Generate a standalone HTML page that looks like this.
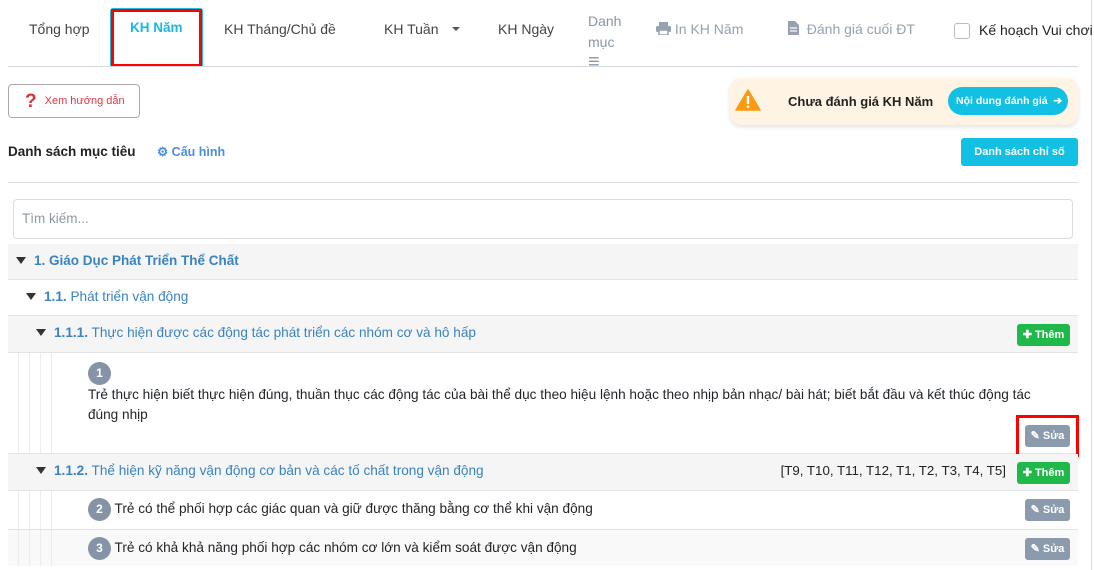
<!DOCTYPE html>
<html><head><meta charset="utf-8">
<style>
*{box-sizing:border-box;margin:0;padding:0}
body{width:1094px;height:570px;overflow:hidden;background:#fff;font-family:"Liberation Sans",Arial,sans-serif;font-size:13.6px;color:#212529;position:relative}
.a{position:absolute;white-space:nowrap}
.nav{color:#444;font-size:14px}
.row{position:absolute;left:8px;width:1070px;border-bottom:1px solid #e3e3e3}
.g{background:#f5f5f5}
.tri{display:inline-block;width:0;height:0;border-left:5px solid transparent;border-right:5px solid transparent;border-top:7px solid #333;margin-right:8px;vertical-align:1px}
.blue{color:#3a83c0}
.badge{display:inline-block;width:23px;height:23px;border-radius:50%;background:#8593a6;color:#fff;font-weight:bold;font-size:12px;text-align:center;line-height:23px}
.btn{position:absolute;border-radius:3px;color:#fff;font-weight:bold;font-size:11px;text-align:center;line-height:22px;height:22px}
.them{background:#1fb94a;width:53px;left:1009px}
.sua{background:#8c9aae;width:45px;left:1017px}
.vl{position:absolute;top:0;bottom:0;width:1px;background:#ececec}
</style></head><body>
<div class="a" style="left:1091px;top:0;width:1px;height:570px;background:#ddd"></div>
<div class="a nav" style="left:29px;top:21px">Tổng hợp</div>
<div class="a" style="left:110px;top:8px;width:93px;height:59px;border:1px solid #1bc0e0;border-bottom:none;border-radius:3px 3px 0 0"></div>
<div class="a" style="left:111px;top:9px;width:91px;height:58px;border:3px solid #f00"></div>
<div class="a" style="left:130px;top:20px;color:#1bb8dd;font-weight:bold;font-size:13.5px">KH Năm</div>
<div class="a nav" style="left:224px;top:21px">KH Tháng/Chủ đề</div>
<div class="a nav" style="left:384px;top:21px">KH Tuần <span style="display:inline-block;border-left:4px solid transparent;border-right:4px solid transparent;border-top:4px solid #555;margin-left:10px;vertical-align:3px"></span></div>
<div class="a nav" style="left:498px;top:21px">KH Ngày</div>
<div class="a" style="left:588px;top:11px;color:#8a96a6;font-size:14px;line-height:21px">Danh<br>mục<br><span style="font-size:20px;line-height:18px">≡</span></div>
<div class="a" style="left:656px;top:21px;color:#97a1b0;font-size:14px"><svg width="15" height="13" viewBox="0 0 15 13" style="vertical-align:-1px"><rect x="3" y="0" width="9" height="4" fill="#97a1b0"/><rect x="0" y="4" width="15" height="6" rx="1.5" fill="#97a1b0"/><rect x="3" y="8" width="9" height="5" fill="#fff" stroke="#97a1b0" stroke-width="1.5"/></svg> In KH Năm</div>
<div class="a" style="left:788px;top:21px;color:#97a1b0;font-size:14px"><svg width="11" height="14" viewBox="0 0 11 14" style="vertical-align:-1px"><path d="M0 0h7l4 4v10H0z" fill="#97a1b0"/><path d="M2 7h7M2 10h7" stroke="#fff" stroke-width="1.2"/></svg>&nbsp; Đánh giá cuối ĐT</div>
<div class="a" style="left:954px;top:23px;width:16px;height:16px;border:1px solid #bbb;border-radius:3px"></div>
<div class="a" style="left:979px;top:22px;font-size:14px;color:#222">Kế hoạch Vui chơi</div>
<div class="a" style="left:8px;top:66px;width:1070px;height:1px;background:#d6d9dd"></div>

<div class="a" style="left:8px;top:84px;width:132px;height:34px;border:1px solid #aaa;border-radius:4px;color:#e53545;font-size:11px;line-height:32px;padding-left:16px"><b style="font-size:19px;vertical-align:-3px;margin-right:8px;color:#e0303e">?</b>Xem hướng dẫn</div>

<div class="a" style="left:730px;top:78px;width:348px;height:47px;background:#fff3e4;border-radius:11px;box-shadow:0 2px 5px rgba(0,0,0,.12)"></div>
<svg class="a" style="left:735px;top:89px" width="26" height="22" viewBox="0 0 26 22"><path d="M13 1L25 21H1z" fill="#fb9a10" stroke="#fb9a10" stroke-width="1.5" stroke-linejoin="round"/><rect x="11.8" y="7" width="2.4" height="8" fill="#fff"/><rect x="11.8" y="16.5" width="2.4" height="2.4" fill="#fff"/></svg>
<div class="a" style="left:788px;top:94px;font-weight:bold;font-size:13px;color:#222">Chưa đánh giá KH Năm</div>
<div class="a" style="left:948px;top:87px;width:120px;height:28px;background:#12c0e4;border-radius:14px;color:#fff;font-weight:bold;font-size:10.5px;line-height:28px;padding-left:8px">Nội dung đánh giá &nbsp;➔</div>

<div class="a" style="left:8px;top:144px;font-weight:bold;font-size:13.5px;color:#222">Danh sách mục tiêu</div>
<div class="a" style="left:157px;top:144px;font-weight:bold;font-size:12.5px;color:#4a8ee0">⚙ Cấu hình</div>
<div class="a" style="left:961px;top:138px;width:117px;height:28px;background:#12c0e4;border-radius:3px;color:#fff;font-weight:bold;font-size:11px;line-height:28px;text-align:center">Danh sách chỉ số</div>

<div class="a" style="left:8px;top:182px;width:1070px;height:1px;background:#ddd"></div>
<div class="a" style="left:13px;top:199px;width:1060px;height:40px;border:1px solid #ddd;border-radius:4px;color:#8e98a4;font-size:13.5px;line-height:38px;padding-left:8px">Tìm kiếm...</div>

<div class="row g" style="top:244px;height:36px;padding:9px 0 0 8px"><span class="tri"></span><b class="blue" style="font-size:13.5px">1. Giáo Dục Phát Triển Thể Chất</b></div>
<div class="row" style="top:280px;height:36px;padding:9px 0 0 18px"><span class="tri"></span><span class="blue"><b>1.1.</b> Phát triển vận động</span></div>
<div class="row g" style="top:316px;height:37px;padding:9px 0 0 28px"><span class="tri"></span><span class="blue"><b>1.1.1.</b> Thực hiện được các động tác phát triển các nhóm cơ và hô hấp</span>
<div class="btn them" style="top:8px">✚ Thêm</div></div>
<div class="row" style="top:353px;height:101px">
<div class="vl" style="left:10px"></div><div class="vl" style="left:21px"></div><div class="vl" style="left:32px"></div><div class="vl" style="left:43px"></div>
<div class="a" style="left:80px;top:9px"><span class="badge">1</span></div>
<div class="a" style="left:80px;top:32px;white-space:normal;width:960px;line-height:20px">Trẻ thực hiện biết thực hiện đúng, thuần thục các động tác của bài thể dục theo hiệu lệnh hoặc theo nhịp bản nhạc/ bài hát; biết bắt đầu và kết thúc động tác<br>đúng nhịp</div>
<div class="btn sua" style="top:72px"><span style="font-size:11px">✎</span> Sửa</div>
<div class="a" style="left:1008px;top:62px;width:63px;height:42px;border:3px solid #f00"></div>
</div>
<div class="row g" style="top:454px;height:37px;padding:9px 0 0 28px"><span class="tri"></span><span class="blue"><b>1.1.2.</b> Thể hiện kỹ năng vận động cơ bản và các tố chất trong vận động</span>
<div class="a" style="right:72px;top:9px;color:#222;font-size:13.3px">[T9, T10, T11, T12, T1, T2, T3, T4, T5]</div>
<div class="btn them" style="top:8px">✚ Thêm</div></div>
<div class="row" style="top:491px;height:39px">
<div class="vl" style="left:10px"></div><div class="vl" style="left:21px"></div><div class="vl" style="left:32px"></div><div class="vl" style="left:43px"></div>
<div class="a" style="left:80px;top:7px"><span class="badge">2</span> Trẻ có thể phối hợp các giác quan và giữ được thăng bằng cơ thể khi vận động</div>
<div class="btn sua" style="top:8px"><span style="font-size:11px">✎</span> Sửa</div></div>
<div class="row" style="top:530px;height:36px;background:#f9f9f9;border:none">
<div class="vl" style="left:10px"></div><div class="vl" style="left:21px"></div><div class="vl" style="left:32px"></div><div class="vl" style="left:43px"></div>
<div class="a" style="left:80px;top:7px"><span class="badge">3</span> Trẻ có khả khả năng phối hợp các nhóm cơ lớn và kiểm soát được vận động</div>
<div class="btn sua" style="top:8px"><span style="font-size:11px">✎</span> Sửa</div></div>
</body></html>
